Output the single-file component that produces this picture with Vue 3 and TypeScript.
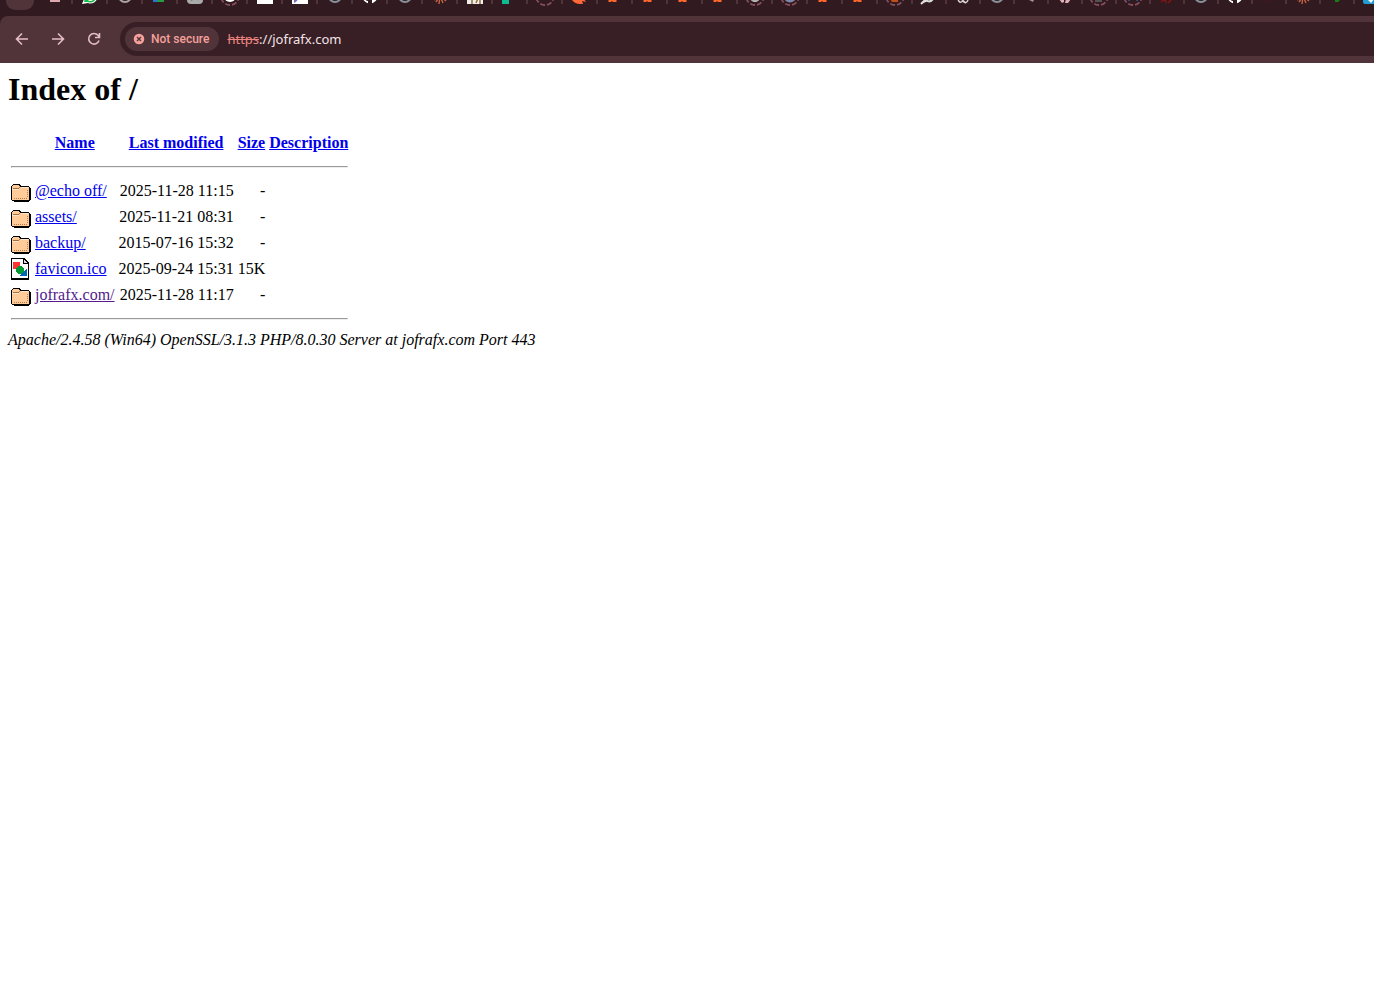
<script setup lang="ts">
interface Tab { icon: string; narrow?: boolean }
interface Entry { name: string; date: string; size: string; kind: 'folder' | 'image'; visited?: boolean }

const wide: string[] = ['active', 'bar', 'whatsapp', 'ring', 'meet', 'gray', 'loadwhite', 'white', 'feather', 'globe', 'github', 'globe', 'burst', 'photo', 'green', 'loading', 'orange', 'reddit', 'reddit', 'reddit', 'reddit', 'loadgray', 'loadblue', 'reddit', 'reddit', 'loadorange']
const narrow: string[] = ['bird', 'knot', 'globe', 'dot', 'pink', 'loaddark', 'loadcolor', 'red', 'globe', 'github', 'dark', 'burst', 'leaf', 'blue']
const tabs: Tab[] = [...wide.map((icon) => ({ icon })), ...narrow.map((icon) => ({ icon, narrow: true }))]

const entries: Entry[] = [
  { name: '@echo off/', date: '2025-11-28 11:15', size: '-', kind: 'folder' },
  { name: 'assets/', date: '2025-11-21 08:31', size: '-', kind: 'folder' },
  { name: 'backup/', date: '2015-07-16 15:32', size: '-', kind: 'folder' },
  { name: 'favicon.ico', date: '2025-09-24 15:31', size: '15K', kind: 'image' },
  { name: 'jofrafx.com/', date: '2025-11-28 11:17', size: '-', kind: 'folder', visited: true },
]
const columns: string[] = ['Name', 'Last modified', 'Size', 'Description']
</script>

<template>
  <div class="browser">
    <header>
      <div class="tabs">
        <div v-for="(tab, i) in tabs" :key="i" class="tab" :class="{ narrow: tab.narrow, active: tab.icon === 'active' }">
          <svg v-if="tab.icon !== 'active'" class="favicon" viewBox="-2 0 20 18" aria-hidden="true">
            <g v-if="tab.icon.startsWith('load')">
              <circle cx="8" cy="8" r="9" fill="none" stroke="#85505c" stroke-width="1.8" stroke-dasharray="5 2" />
              <circle v-if="tab.icon === 'loadwhite'" cx="8" cy="8" r="6" fill="#fff" />
              <circle v-else-if="tab.icon === 'loadgray'" cx="8" cy="8" r="5.5" fill="#aaa" stroke="#ccc" />
              <circle v-else-if="tab.icon === 'loadblue'" cx="8" cy="8" r="6.5" fill="#7f86aa" />
              <path v-else-if="tab.icon === 'loadorange'" d="M3 11h8v3H5z" fill="#bf4f18" />
              <path v-else-if="tab.icon === 'loaddark'" d="M4 13h7" stroke="#56534f" stroke-width="2" />
              <path v-else-if="tab.icon === 'loadcolor'" d="M3 12h2M11 12h2" stroke="#2b4d79" stroke-width="2" />
            </g>
            <path v-else-if="tab.icon === 'bar'" d="M3 12h10v2H3z" fill="#dda7b0" />
            <g v-else-if="tab.icon === 'whatsapp'">
              <path d="M0 16 2 11a7 7 0 1 1 4 4Z" fill="#fff" />
              <path d="m2 14 1-4a5.5 5.5 0 1 1 3 4Z" fill="#12bd45" />
              <path d="M5 10q3 4 6 1" fill="none" stroke="#fff" stroke-width="1.5" />
            </g>
            <circle v-else-if="tab.icon === 'ring' || tab.icon === 'globe'" cx="8" cy="8" r="6" fill="none" :stroke="tab.icon === 'ring' ? '#aaa4a6' : '#89919c'" stroke-width="2" />
            <g v-else-if="tab.icon === 'meet'">
              <path d="M1 7h4v7H1z" fill="#2874df" />
              <path d="M5 7h7v7H5z" fill="#269b3f" />
              <path d="M13 7h2v6z" fill="#176626" />
            </g>
            <g v-else-if="tab.icon === 'gray'">
              <rect width="16" height="16" rx="4" fill="#aaa" />
              <path d="M4 13q4-4 8-1" stroke="#777" fill="none" />
            </g>
            <path v-else-if="tab.icon === 'white'" d="M0 0h16v16H0z" fill="#fff" />
            <g v-else-if="tab.icon === 'feather'">
              <path d="M0 0h16v16H0z" fill="#fff" />
              <path d="M2 15V9h5q-1 4-5 6" fill="#7c6bb2" />
            </g>
            <g v-else-if="tab.icon === 'github'">
              <circle cx="8" cy="8" r="7.5" fill="#fff" />
              <path d="M5 3h6q2 3 1 6l-2 2v5H6v-3q-2 0-3-2h1l2 1v-1L4 9Q3 6 5 3Z" fill="#311a20" />
            </g>
            <path v-else-if="tab.icon === 'burst'" d="m8 8-6 4m6-4-4 6m4-6-1 8m1-8 3 7m-3-7 6 5" stroke="#c76444" stroke-width="1.4" />
            <g v-else-if="tab.icon === 'photo'">
              <path d="M0 0h16v16H0z" fill="#eee" />
              <path d="M5 16v-4m4 3 2-5m2 6v-5" stroke="#967138" stroke-width="1.5" />
            </g>
            <path v-else-if="tab.icon === 'green'" d="M0 9h7v7H0z" fill="#0bbd91" />
            <path v-else-if="tab.icon === 'orange'" d="M0 8h10l4 6-4-1 1 3H8Q3 16 0 12Z" fill="#ff6737" />
            <path v-else-if="tab.icon === 'reddit'" d="M2 12h7l1 1-1 1H6l-1-1-1 1H2l-1-1Z" fill="#ff6629" />
            <path v-else-if="tab.icon === 'bird'" d="m0 16 5-5q3 5 7 0" fill="#eee" stroke="#ddd" stroke-width="2" />
            <path v-else-if="tab.icon === 'knot'" d="M3 11q1 5 5 2 3 4 5-1M6 11l5 4" fill="none" stroke="#d9d1d2" stroke-width="1.5" />
            <path v-else-if="tab.icon === 'dot'" d="M6 12h5l-1 2z" fill="#a78f94" />
            <path v-else-if="tab.icon === 'pink'" d="M2 11h5v3l-2 1Zm7 0h5l-3 4H8Z" fill="#dfb0b7" />
            <path v-else-if="tab.icon === 'red'" d="m2 14 4-3 1 4m2 0 4-4" fill="none" stroke="#851414" stroke-width="1.5" />
            <path v-else-if="tab.icon === 'dark'" d="M2 13h3m2 0h2m3 0h2" stroke="#4b1729" />
            <path v-else-if="tab.icon === 'leaf'" d="M6 12h5l-2 2H6z" fill="#168014" />
            <g v-else>
              <rect width="16" height="16" rx="2" fill="#219dd1" />
              <path d="m5 12 6-1-3 4z" fill="#fff" />
            </g>
          </svg>
        </div>
      </div>
      <nav class="toolbar">
        <button type="button" aria-label="Back"><svg viewBox="0 0 16 16"><path d="M14 8H3M8 2.5 2.5 8 8 13.5" /></svg></button>
        <button type="button" aria-label="Forward"><svg viewBox="0 0 16 16"><path d="M2 8h11M8 2.5 13.5 8 8 13.5" /></svg></button>
        <button type="button" aria-label="Reload"><svg viewBox="0 0 16 16"><path d="M13 9.5A5.3 5.3 0 1 1 12 4.3L13.3 6M13.5 2v4.5H9" /></svg></button>
        <div class="address">
          <button type="button" class="security">
            <svg viewBox="0 0 12 12" aria-hidden="true"><circle cx="6" cy="6" r="6" /><path d="m4 4 4 4m0-4L4 8" /></svg>
            Not secure
          </button>
          <span class="url"><s>https</s>://jofrafx.com</span>
        </div>
      </nav>
    </header>
    <main>
      <h1>Index of /</h1>
      <table>
        <thead>
          <tr>
            <th><span class="blank"></span></th>
            <th v-for="column in columns" :key="column"><a href="#">{{ column }}</a></th>
          </tr>
        </thead>
        <tbody>
          <tr><th colspan="5"><hr></th></tr>
          <tr v-for="entry in entries" :key="entry.name">
            <td class="icon">
              <svg v-if="entry.kind === 'folder'" viewBox="0 0 20 22" shape-rendering="crispEdges" role="img" aria-label="Directory">
                <path d="M2 4h7v1h1v1h8v1h1v1h1v12h-1v1h-1v1H3v-1H1v-1H0V6h1V5h1z" fill="#000" />
                <path d="M2 5h6v1h1v1h9v13H1V6h1z" fill="#fc9" />
                <path d="M1 9h7v1H1zM10 7h7v1h-7z" fill="#ffe5cc" />
                <path d="M2 8h6v1H2zM8 7h1v1H8z" fill="#a86e43" />
                <path d="M3 18.5h14M16.5 10v8" fill="none" stroke="#b37a4c" stroke-dasharray="1 1" />
              </svg>
              <svg v-else viewBox="0 0 20 22" shape-rendering="crispEdges" role="img" aria-label="Image">
                <path d="M0 0h13l5 5v17H0z" fill="#000" />
                <path d="M1 1h11v5h5v14H1z" fill="#fff" />
                <path d="M13 2v3h3z" fill="#ddd" />
                <path d="M2 4h7v7H2z" fill="#f33" />
                <path d="M16 10v8H8z" fill="#06b" />
                <circle cx="9" cy="12" r="4" fill="#093" />
              </svg>
            </td>
            <td><a href="#" :class="{ visited: entry.visited }">{{ entry.name }}</a></td>
            <td class="date">{{ entry.date }}</td>
            <td class="right">{{ entry.size }}</td>
            <td></td>
          </tr>
          <tr><th colspan="5"><hr></th></tr>
        </tbody>
      </table>
      <address>Apache/2.4.58 (Win64) OpenSSL/3.1.3 PHP/8.0.30 Server at jofrafx.com Port 443</address>
    </main>
  </div>
</template>

<style>
body { margin: 0; background: #fff; }
</style>

<style scoped>
header { background: #311a20; overflow: hidden; font-family: "Noto Sans", sans-serif; }
.tabs { display: flex; height: 16px; padding-left: 3px; overflow: hidden; }
.tab { flex: 0 0 35px; height: 4px; box-sizing: border-box; display: flex; justify-content: center; align-items: flex-end; border-right: 2px solid #50343a; }
.tab.narrow { flex-basis: 34px; }
.tab.active { border: 0; height: 10px; flex-basis: 28px; background: #50343a; border-radius: 0 0 9px 9px; margin: 0 4px 0 3px; }
.favicon { flex: none; width: 20px; height: 18px; margin-bottom: -2px; }
.toolbar { display: flex; align-items: center; box-sizing: border-box; height: 47px; padding: 0 0 2px 14px; background: #50343a; border-radius: 8px 0 0 0; }
button { border: 0; padding: 0; background: transparent; font: inherit; }
.toolbar > button { width: 16px; height: 16px; margin-right: 20px; }
.toolbar svg { display: block; width: 16px; height: 16px; fill: none; stroke: #e5bdc5; stroke-width: 1.6; }
.address { flex: 1; display: flex; align-items: center; height: 34px; padding-left: 5px; margin-left: -2px; border-radius: 17px 0 0 17px; background: #381f25; box-sizing: border-box; }
.security { display: flex; align-items: center; gap: 6px; height: 24px; padding: 0 10px 0 8px; border-radius: 12px; background: #50343a; color: #f5a09a; font-family: Roboto, sans-serif; font-size: 12px; font-weight: 500; }
.toolbar .security svg { width: 12px; height: 12px; fill: #f5a09a; stroke: #50343a; stroke-width: 1.4; }
.url { margin-left: 8px; font-size: 13px; color: #f3e3e6; }
s { color: #ee8581; }
main { padding: 8px; color: #000; font: 16px "Liberation Serif", serif; }
h1 { font-size: 32px; line-height: 37px; margin: 0 0 21px; }
table { border-spacing: 2px; border-collapse: separate; line-height: 18px; }
th, td { padding: 1px; }
.blank { display: block; width: 20px; height: 22px; }
.icon svg { display: block; width: 20px; height: 22px; }
.date, .right { text-align: right; }
hr { margin: 8px 0; border: 1px solid #9a9a9a; border-right-color: #eee; border-bottom-color: #eee; }
a { color: #00e; text-decoration: underline; }
a.visited { color: #551a8b; }
address { font-style: italic; line-height: 18px; }
</style>
